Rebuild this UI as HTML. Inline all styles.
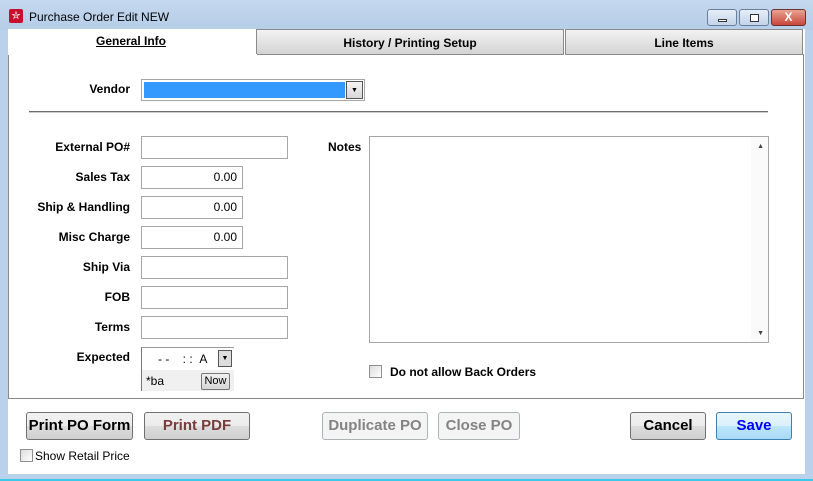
<!DOCTYPE html>
<html><head><style>
*{margin:0;padding:0;box-sizing:border-box}
body{width:813px;height:481px;background:#b9d1ea;font-family:"Liberation Sans",Arial,sans-serif;position:relative;overflow:hidden}
.a{position:absolute}
.lbl{position:absolute;right:683px;font-size:12px;font-weight:bold;color:#000;text-align:right;white-space:nowrap}
.box{position:absolute;border:1px solid #a6a6a6;background:#fff;font-size:12px;text-align:right;padding-right:5px;line-height:20px}
.btn{position:absolute;top:412px;height:28px;border:1px solid #707070;border-radius:3px;background:linear-gradient(#f2f2f2,#ebebeb 50%,#dddddd 51%,#cfcfcf);font-size:15px;font-weight:bold;text-align:center;line-height:26px}
.dis{border-color:#adb2b5;background:#f4f4f4;color:#838383}
.cb{position:absolute;width:13px;height:13px;border:1px solid #8e8f8f;background:linear-gradient(135deg,#dcdcdc,#fff)}
</style></head><body>
<div class="a" style="left:0;top:0;width:813px;height:30px;background:linear-gradient(#c5d8ee,#b5cde8)"></div>
<div class="a" style="left:9px;top:9px;width:14px;height:14px;background:#c8102e;border-radius:2px;color:#fff;font-size:11px;line-height:14px;text-align:center">✮</div>
<div class="a" style="left:29px;top:10px;font-size:12px;color:#000">Purchase Order Edit NEW</div>
<div class="a" style="left:707px;top:9px;width:30px;height:17px;border:1px solid #6b7e99;border-radius:3px;background:linear-gradient(#e6eef8,#c3d3ea)"><div class="a" style="left:10px;top:9px;width:9px;height:3px;border:1px solid #333;background:#fff"></div></div>
<div class="a" style="left:739px;top:9px;width:30px;height:17px;border:1px solid #6b7e99;border-radius:3px;background:linear-gradient(#e6eef8,#c3d3ea)"><div class="a" style="left:10px;top:4px;width:9px;height:8px;border:1px solid #333;background:#fff"></div></div>
<div class="a" style="left:771px;top:9px;width:35px;height:17px;border:1px solid #6b3030;border-radius:3px;background:linear-gradient(#e8a393,#c7463a);color:#fff;font-weight:bold;font-size:12px;text-align:center;line-height:15px">X</div>
<div class="a" style="left:8px;top:29px;width:797px;height:445px;background:#fff"></div>
<div class="a" style="left:0;top:479px;width:813px;height:2px;background:#3cc8e8"></div>
<!-- tabs -->
<div class="a" style="left:64px;top:34px;width:134px;text-align:center;font-size:12px;font-weight:bold;text-decoration:underline">General Info</div>
<div class="a" style="left:256px;top:29px;width:308px;height:26px;border:1px solid #8a8a8a;background:linear-gradient(#f2f2f2,#d4d4d4);font-size:12px;font-weight:bold;text-align:center;line-height:26px">History / Printing Setup</div>
<div class="a" style="left:565px;top:29px;width:238px;height:26px;border:1px solid #8a8a8a;background:linear-gradient(#f2f2f2,#d4d4d4);font-size:12px;font-weight:bold;text-align:center;line-height:26px">Line Items</div>
<div class="a" style="left:8px;top:54px;width:796px;height:345px;border:1px solid #8a8a8a;border-top:none"></div>
<div class="a" style="left:8px;top:54px;width:249px;height:1px;background:#fff"></div>
<!-- vendor -->
<div class="lbl" style="top:82px">Vendor</div>
<div class="a" style="left:141px;top:79px;width:224px;height:22px;border:1px solid #a6a6a6;background:#fff"><div class="a" style="left:2px;top:2px;width:201px;height:16px;background:#3399ff"></div><div class="a" style="left:204px;top:1px;width:17px;height:18px;border:1px solid #555;background:linear-gradient(#f4f4f4,#d8d8d8);font-size:7px;text-align:center;line-height:17px">▼</div></div>
<div class="a" style="left:29px;top:111px;width:739px;height:2px;background:#6d6d6d;border-bottom:1px solid #ccc"></div>
<div class="lbl" style="top:140px">External PO#</div><div class="box" style="left:141px;top:136px;width:147px;height:23px"></div>
<div class="lbl" style="top:170px">Sales Tax</div><div class="box" style="left:141px;top:166px;width:102px;height:23px">0.00</div>
<div class="lbl" style="top:200px">Ship &amp; Handling</div><div class="box" style="left:141px;top:196px;width:102px;height:23px">0.00</div>
<div class="lbl" style="top:230px">Misc Charge</div><div class="box" style="left:141px;top:226px;width:102px;height:23px">0.00</div>
<div class="lbl" style="top:260px">Ship Via</div><div class="box" style="left:141px;top:256px;width:147px;height:23px"></div>
<div class="lbl" style="top:290px">FOB</div><div class="box" style="left:141px;top:286px;width:147px;height:23px"></div>
<div class="lbl" style="top:320px">Terms</div><div class="box" style="left:141px;top:316px;width:147px;height:23px"></div>
<div class="lbl" style="top:350px">Expected</div>
<div class="a" style="left:141px;top:347px;width:93px;height:44px;border-left:1px solid #777;border-top:1px solid #999;background:#f0f0f0"><div class="a" style="left:0;top:0;width:92px;height:22px;background:#fff"></div><div class="a" style="left:16px;top:4px;font-size:12px">- -&nbsp;&nbsp;&nbsp;&nbsp;: :&nbsp;&nbsp;A</div><div class="a" style="left:76px;top:2px;width:14px;height:17px;border:1px solid #555;background:#ddd;font-size:7px;text-align:center;line-height:16px">▼</div><div class="a" style="left:4px;top:26px;font-size:12px">*ba</div><div class="a" style="left:59px;top:25px;width:29px;height:17px;border:1px solid #777;border-radius:2px;background:linear-gradient(#f0f0f0,#d6d6d6);font-size:11px;text-align:center;line-height:15px">Now</div></div>
<div class="a" style="left:328px;top:140px;font-size:12px;font-weight:bold">Notes</div>
<div class="a" style="left:369px;top:136px;width:400px;height:207px;border:1px solid #a6a6a6;background:#fff"><div class="a" style="right:0;top:0;width:17px;height:205px;background:#fafafa"></div><div class="a" style="right:4px;top:6px;font-size:7px;color:#444">▲</div><div class="a" style="right:4px;bottom:5px;font-size:7px;color:#444">▼</div></div>
<div class="cb" style="left:369px;top:365px"></div>
<div class="a" style="left:390px;top:365px;font-size:12px;font-weight:bold">Do not allow Back Orders</div>
<div class="btn" style="left:26px;width:107px">Print PO Form</div>
<div class="btn" style="left:144px;width:106px;color:#7a3b3b">Print PDF</div>
<div class="btn dis" style="left:322px;width:106px">Duplicate PO</div>
<div class="btn dis" style="left:438px;width:82px">Close PO</div>
<div class="btn" style="left:630px;width:76px">Cancel</div>
<div class="btn" style="left:716px;width:76px;color:#0000ff;border-color:#3c7fb1;background:linear-gradient(#eaf6fd,#d9f0fc 50%,#bee6fd 51%,#a7d9f5)">Save</div>
<div class="cb" style="left:20px;top:449px"></div>
<div class="a" style="left:35px;top:449px;font-size:12px">Show Retail Price</div>
</body></html>
